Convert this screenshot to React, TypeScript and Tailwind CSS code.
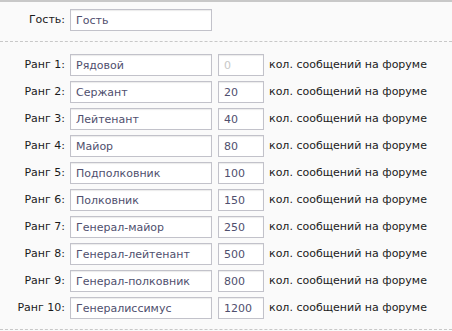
const RANKS: [string, string][] = [
  ["Рядовой", ""],
  ["Сержант", "20"],
  ["Лейтенант", "40"],
  ["Майор", "80"],
  ["Подполковник", "100"],
  ["Полковник", "150"],
  ["Генерал-майор", "250"],
  ["Генерал-лейтенант", "500"],
  ["Генерал-полковник", "800"],
  ["Генералиссимус", "1200"],
];

const inputCls =
  "h-[22px] border border-[#c2c2ca] bg-white px-[5px] text-[11px] text-[#4f4f6e] outline-none shadow-[inset_0_1px_1px_rgba(0,0,0,0.08)]";

function Row({ label, children }: { label: string; children: React.ReactNode }) {
  return (
    <div className="flex items-center">
      <label className="w-[70px] pr-[5px] text-right text-[11px] text-[#1a1a1a]">{label}</label>
      {children}
    </div>
  );
}

export default function App() {
  return (
    <div
      className="h-[331px] w-[452px] overflow-hidden border-t-2 border-[#c8c8c8] bg-[#fafafa]"
      style={{ fontFamily: '"DejaVu Sans", Verdana, sans-serif' }}
    >
      <div className="pt-[7px] pb-[10px]">
        <Row label="Гость:">
          <input className={`${inputCls} w-[142px]`} defaultValue="Гость" />
        </Row>
      </div>
      <div className="border-t border-dashed border-[#c8c8c8]" />
      <div className="flex flex-col gap-[5px] pt-[12px] pb-[10px]">
        {RANKS.map(([name, count], i) => (
          <Row key={name} label={`Ранг ${i + 1}:`}>
            <input className={`${inputCls} w-[142px]`} defaultValue={name} />
            <input
              className={`${inputCls} ml-[6px] w-[46px] placeholder:text-[#c8c8c8]`}
              defaultValue={count}
              placeholder="0"
            />
            <span className="ml-[5px] text-[11px] text-[#1a1a1a]">кол. сообщений на форуме</span>
          </Row>
        ))}
      </div>
      <div className="border-t border-dashed border-[#c8c8c8]" />
    </div>
  );
}
